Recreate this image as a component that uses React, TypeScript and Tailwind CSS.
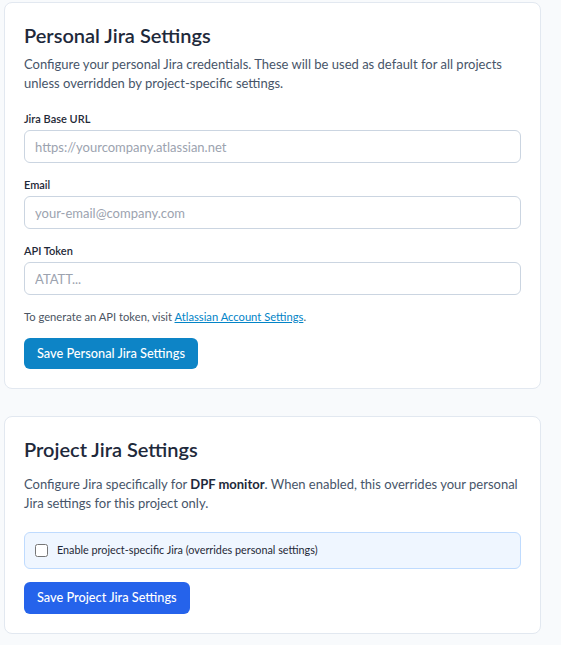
import React from "react";

const font = { fontFamily: "Lato, 'Noto Sans', sans-serif" };

function Field({ label, placeholder, first }: { label: string; placeholder: string; first?: boolean }) {
  return (
    <div className={first ? "mt-[18px]" : "mt-[14px]"}>
      <label className="block text-[11px] leading-[16px] font-semibold text-[#1f2937] mb-[3px]">{label}</label>
      <input
        type="text"
        placeholder={placeholder}
        className="block w-full h-[33px] rounded-md border border-[#cbd5e1] bg-white px-[10px] text-[13px] text-[#1f2937] placeholder:text-[#9ca3af] outline-none"
        style={font}
      />
    </div>
  );
}

export default function App() {
  return (
    <div className="min-h-[645px] bg-[#f8fafc] pt-[2px] pl-[4px]" style={font}>
      <div className="w-[537px] rounded-lg border border-[#e2e8f0] bg-white p-[19px]">
        <h2 className="text-[20px] leading-[26px] font-semibold text-[#1e293b]">Personal Jira Settings</h2>
        <p className="mt-[7px] text-[13px] leading-[19px] text-[#475569] whitespace-nowrap">
          Configure your personal Jira credentials. These will be used as default for all projects
          <br />
          unless overridden by project-specific settings.
        </p>
        <Field first label="Jira Base URL" placeholder="https://yourcompany.atlassian.net" />
        <Field label="Email" placeholder="your-email@company.com" />
        <Field label="API Token" placeholder="ATATT..." />
        <p className="mt-[14px] text-[11.2px] leading-[16px] text-[#4b5563]">
          To generate an API token, visit{" "}
          <a href="#" className="text-[#0284c7] underline">Atlassian Account Settings</a>.
        </p>
        <button className="mt-[13px] h-[31px] rounded-md bg-[#0d84c6] px-[13px] text-[12.75px] font-medium text-white">
          Save Personal Jira Settings
        </button>
      </div>

      <div className="mt-[27px] w-[537px] rounded-lg border border-[#e2e8f0] bg-white p-[19px]">
        <h2 className="text-[20px] leading-[26px] font-semibold text-[#1e293b]">Project Jira Settings</h2>
        <p className="mt-[13px] text-[13px] leading-[19px] text-[#475569] whitespace-nowrap">
          Configure Jira specifically for <strong className="font-bold text-[#1e293b]">DPF monitor</strong>. When enabled, this overrides your personal
          <br />
          Jira settings for this project only.
        </p>
        <label className="mt-[19px] flex h-[37px] items-center gap-[9px] rounded-md border border-[#bfdbfe] bg-[#eff6ff] px-[10px]">
          <input type="checkbox" className="m-0 h-[13px] w-[13px]" />
          <span className="text-[10.8px] text-[#1f2937]">Enable project-specific Jira (overrides personal settings)</span>
        </label>
        <button className="mt-[13px] h-[32px] rounded-md bg-[#2563eb] px-[13px] text-[12.75px] font-medium text-white">
          Save Project Jira Settings
        </button>
      </div>
    </div>
  );
}
